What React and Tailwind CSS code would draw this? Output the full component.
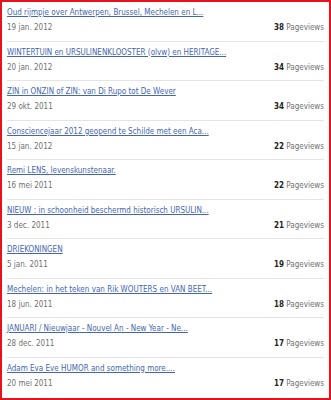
const posts = [
  { title: "Oud rijmpje over Antwerpen, Brussel, Mechelen en L...", date: "19 jan. 2012", views: 38 },
  { title: "WINTERTUIN en URSULINENKLOOSTER (olvw) en HERITAGE...", date: "20 jan. 2012", views: 34 },
  { title: "ZIN in ONZIN of ZIN: van Di Rupo tot De Wever", date: "29 okt. 2011", views: 34 },
  { title: "Consciencejaar 2012 geopend te Schilde met een Aca...", date: "15 jan. 2012", views: 22 },
  { title: "Remi LENS, levenskunstenaar.", date: "16 mei 2011", views: 22 },
  { title: "NIEUW : in schoonheid beschermd historisch URSULIN...", date: "3 dec. 2011", views: 21 },
  { title: "DRIEKONINGEN", date: "5 jan. 2011", views: 19 },
  { title: "Mechelen: in het teken van Rik WOUTERS en VAN BEET...", date: "18 jun. 2011", views: 18 },
  { title: "JANUARI / Nieuwjaar - Nouvel An - New Year - Ne...", date: "28 dec. 2011", views: 17 },
  { title: "Adam Eva Eve HUMOR and something more....", date: "20 mei 2011", views: 17 },
];

export default function App() {
  return (
    <div className="h-[400px] w-[331px] overflow-hidden border-2 border-[#e8121c] bg-white font-['DejaVu_Sans_Condensed','DejaVu_Sans',sans-serif] text-[8px]">
      <ul className="px-[5px]">
        {posts.map((p, i) => (
          <li
            key={i}
            className={`flex h-[39.5px] flex-col pt-[6px] ${i < posts.length - 1 ? "border-b border-[#e4e4e4]" : ""}`}
          >
            <a href="#" className="leading-[10px] text-[#4466b0] underline">
              {p.title}
            </a>
            <div className="mt-[5px] flex items-center justify-between leading-[10px] text-[#707070]">
              <span>{p.date}</span>
              <span>
                <b className="text-[#222]">{p.views}</b> Pageviews
              </span>
            </div>
          </li>
        ))}
      </ul>
    </div>
  );
}
